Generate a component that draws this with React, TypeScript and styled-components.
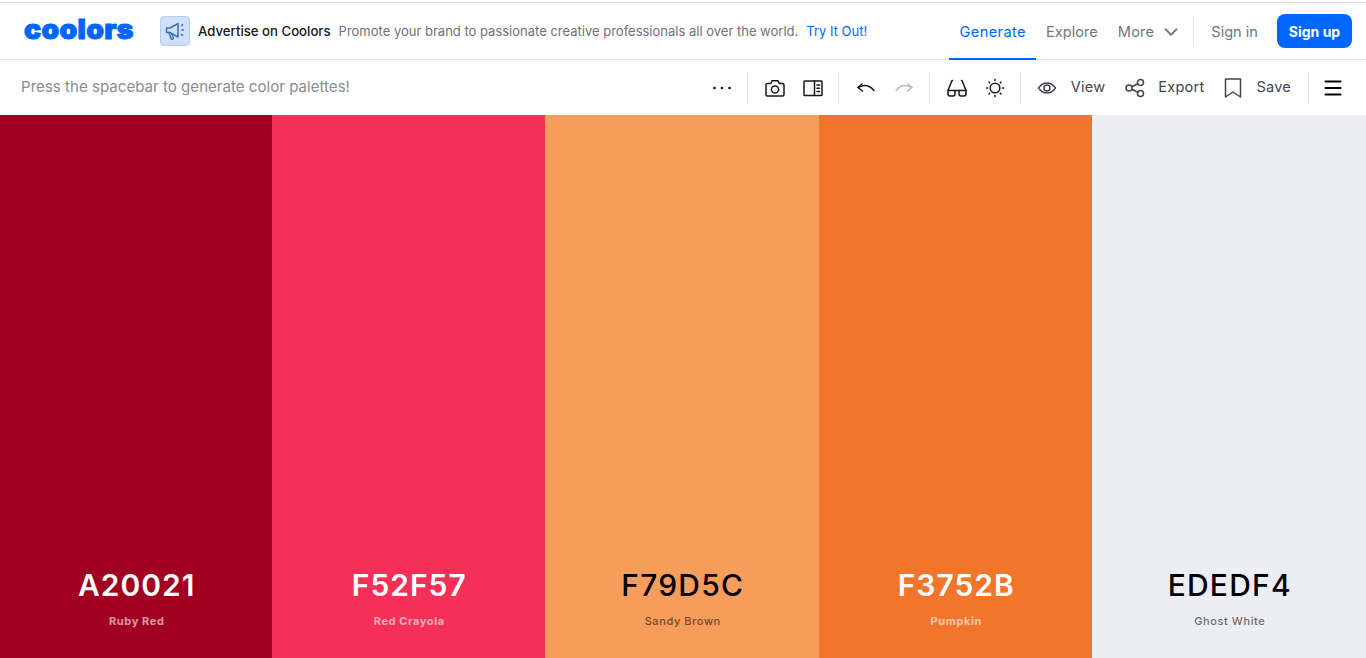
import styled, { createGlobalStyle } from "styled-components";
import { ChevronDown } from "lucide-react";

const GlobalStyle = createGlobalStyle`
  html, body {
    margin: 0;
    padding: 0;
    height: 100%;
    background: #fff;
    font-family: "Inter", sans-serif;
  }
  #root {
    height: 100%;
  }
`;

const Page = styled.div`
  display: flex;
  flex-direction: column;
  height: 658px;
  overflow: hidden;
  padding-top: 2px;
  box-sizing: border-box;
`;

const Header = styled.header`
  display: flex;
  align-items: stretch;
  height: 58px;
  flex-shrink: 0;
  box-sizing: border-box;
  border-top: 1px solid #dedfe1;
  border-bottom: 1px solid #e4e5e7;
  padding: 0 14px 0 24px;
`;

const Logo = styled.div`
  width: 111px;
  margin-right: 25px;
  align-self: center;
  font-family: "Inter", sans-serif;
  font-size: 27px;
  line-height: 27px;
  font-weight: 900;
  letter-spacing: 0.3px;
  color: #0066ff;
  -webkit-text-stroke: 1px #0066ff;
  margin-top: -3px;
  transform: scaleX(1.05);
  transform-origin: left center;
`;

const Promo = styled.div`
  display: flex;
  align-items: center;
  flex: 1;
  font-size: 13px;
`;

const PromoIcon = styled.div`
  width: 28px;
  height: 28px;
  border-radius: 4px;
  border: 1px solid #b3cdf2;
  background: #cfe0fb;
  color: #3f6fb8;
  display: flex;
  align-items: center;
  justify-content: center;
  margin-right: 8px;
`;

const PromoTitle = styled.span`
  color: #16181c;
  font-weight: 500;
  font-size: 13.2px;
  margin-right: 8px;
`;

const PromoText = styled.span`
  color: #6f7278;
  margin-right: 8px;
`;

const PromoLink = styled.span`
  color: #0066ff;
`;

const Nav = styled.nav`
  display: flex;
  align-items: stretch;
`;

const NavItem = styled.div<{ $active?: boolean; $tracking?: number }>`
  display: flex;
  align-items: center;
  padding: 0 10px;
  font-size: 14.6px;
  letter-spacing: ${(p) => p.$tracking ?? 0}px;
  color: ${(p) => (p.$active ? "#0066ff" : "#73767c")};
  box-shadow: ${(p) => (p.$active ? "inset 0 -2px 0 #0066ff" : "none")};
  margin-bottom: -1px;
`;

const NavChevron = styled(ChevronDown)`
  margin-left: 6px;
`;

const NavDivider = styled.div`
  width: 1px;
  height: 28px;
  align-self: center;
  background: #e4e5e7;
  margin: 0 7px 0 1px;
`;

const SignUp = styled.button`
  align-self: center;
  width: 75px;
  height: 34px;
  margin-left: 9px;
  border: 0;
  border-radius: 8px;
  background: #0066ff;
  color: #fff;
  font-family: inherit;
  font-size: 14px;
  font-weight: 700;
  padding: 0;
`;

const Toolbar = styled.div`
  display: flex;
  align-items: center;
  height: 55px;
  flex-shrink: 0;
  padding: 0 21px;
`;

const Hint = styled.div`
  flex: 1;
  font-size: 15.1px;
  color: #8a8d93;
  margin-top: -2px;
`;

const Tools = styled.div`
  display: flex;
  align-items: center;
`;

const ToolButton = styled.div<{ $muted?: boolean }>`
  width: 38px;
  height: 28px;
  display: flex;
  align-items: center;
  justify-content: center;
  color: ${(p) => (p.$muted ? "#b9babd" : "#16181c")};
`;

const ToolDivider = styled.div`
  width: 1px;
  height: 28px;
  background: #e4e5e7;
  margin: 0 8px 0 6px;
`;

const EndDivider = styled(ToolDivider)`
  margin: 0 12px 0 17px;
`;

const LabelTool = styled.div<{ $first?: boolean; $spaced?: boolean }>`
  display: flex;
  align-items: center;
  gap: ${(p) => (p.$first ? 12 : 11)}px;
  margin-left: ${(p) => (p.$first ? 6 : p.$spaced ? 18 : 17)}px;
  font-size: 14.6px;
  letter-spacing: 0.2px;
  color: #43464c;
`;

const ToolLabel = styled.span`
  margin-top: -2px;
`;

const MenuIcon = styled.div`
  display: flex;
  color: #000;
`;

const Palette = styled.main`
  flex: 1;
  display: grid;
  grid-template-columns: 272px 273px 274px 273px 1fr;
`;

const Swatch = styled.section<{ $bg: string; $light?: boolean }>`
  display: flex;
  flex-direction: column;
  align-items: center;
  justify-content: flex-end;
  padding: 0 0 30px 1.5px;
  background: ${(p) => p.$bg};
  color: ${(p) => (p.$light ? "#fff" : "#000")};
`;

const Hex = styled.div<{ $light?: boolean }>`
  font-size: 30px;
  line-height: 36px;
  font-weight: ${(p) => (p.$light ? 600 : 500)};
  letter-spacing: ${(p) => (p.$light ? 1 : 1.2)}px;
  margin-bottom: -1px;
  transform: translateY(1px);
`;

const ColorName = styled.div<{ $light?: boolean }>`
  margin-top: 13px;
  font-size: 11px;
  line-height: 14px;
  font-weight: ${(p) => (p.$light ? 700 : 500)};
  letter-spacing: 0.6px;
  opacity: ${(p) => (p.$light ? 0.6 : 0.55)};
`;

const Icon = styled.svg.attrs({
  viewBox: "0 0 24 24",
  fill: "none",
  stroke: "currentColor",
  strokeWidth: 1.5,
  strokeLinecap: "round",
  strokeLinejoin: "round",
})`
  width: 24px;
  height: 24px;
  flex-shrink: 0;
`;

const swatches = [
  { hex: "A20021", name: "Ruby Red", bg: "#a20021", light: true },
  { hex: "F52F57", name: "Red Crayola", bg: "#f52f57", light: true },
  { hex: "F79D5C", name: "Sandy Brown", bg: "#f79d5c", light: false },
  { hex: "F3752B", name: "Pumpkin", bg: "#f3752b", light: true },
  { hex: "EDEDF4", name: "Ghost White", bg: "#ededf4", light: false },
];

export default function App() {
  return (
    <Page>
      <GlobalStyle />
      <Header>
        <Logo>coolors</Logo>
        <Promo>
          <PromoIcon>
            <Icon>
              <path d="M3.500 9H7l8-4.500V18l-8-4.500H3.500z" />
              <path d="M6 13.500l2 6a1.200 1.200 0 0 0 2.300-.600L9 15" />
              <path d="M18.500 6.500l1-.7M19 11h1.500M18.500 15.500l1 .7" />
            </Icon>
          </PromoIcon>
          <PromoTitle>Advertise on Coolors</PromoTitle>
          <PromoText>Promote your brand to passionate creative professionals all over the world.</PromoText>
          <PromoLink>Try It Out!</PromoLink>
        </Promo>
        <Nav>
          <NavItem $active $tracking={0.4}>Generate</NavItem>
          <NavItem>Explore</NavItem>
          <NavItem $tracking={0.2}>
            More
            <NavChevron size={22} strokeWidth={2} />
          </NavItem>
          <NavDivider />
          <NavItem>Sign in</NavItem>
          <SignUp>Sign up</SignUp>
        </Nav>
      </Header>
      <Toolbar>
        <Hint>Press the spacebar to generate color palettes!</Hint>
        <Tools>
          <ToolButton>
            <Icon>
              <circle cx="4.500" cy="12" r="0.600" fill="currentColor" />
              <circle cx="12" cy="12" r="0.600" fill="currentColor" />
              <circle cx="19.500" cy="12" r="0.600" fill="currentColor" />
            </Icon>
          </ToolButton>
          <ToolDivider />
          <ToolButton>
            <Icon>
              <path d="M4.500 7.500h3.200L9 4.800h6l1.300 2.700h3.200A1.500 1.500 0 0 1 21 9v9.500a1.500 1.500 0 0 1-1.500 1.500h-15A1.500 1.500 0 0 1 3 18.500V9a1.500 1.500 0 0 1 1.500-1.500z" />
              <circle cx="12" cy="13.500" r="3.600" />
            </Icon>
          </ToolButton>
          <ToolButton>
            <Icon>
              <rect x="3" y="5" width="18" height="14.500" rx="0.800" />
              <path d="M13.500 5v14.500M16 9h2.500M16 12.300h2.500M16 15.600h2.500" />
            </Icon>
          </ToolButton>
          <ToolDivider />
          <ToolButton>
            <Icon>
              <path d="M8 8 4 11.500 8.500 15" />
              <path d="M4 11.500c5.500-3 11.500-2.500 16 3" />
            </Icon>
          </ToolButton>
          <ToolButton $muted>
            <Icon>
              <path d="M16 8l4 3.500-4.500 3.500" />
              <path d="M20 11.500c-5.500-3-11.500-2.500-16 3" />
            </Icon>
          </ToolButton>
          <ToolDivider />
          <ToolButton>
            <Icon>
              <path d="M7.500 4.500H7L3 14.500v3.500a2 2 0 0 0 2 2h3a2 2 0 0 0 2-2v-3.500" />
              <path d="M16.500 4.500h.5l4 10v3.500a2 2 0 0 1-2 2h-3a2 2 0 0 1-2-2v-3.500" />
              <path d="M3 14.500h18" />
            </Icon>
          </ToolButton>
          <ToolButton>
            <Icon>
              <circle cx="12" cy="12" r="4.800" />
              <path d="M12 3.500v1M12 19.500v1M3.500 12h1M19.500 12h1M6 6l.7.7M17.300 17.300l.7.7M6 18l.7-.7M17.300 6.700l.7-.7" />
            </Icon>
          </ToolButton>
          <ToolDivider />
          <LabelTool $first>
            <Icon>
              <path d="M3.500 12c2.500-3.500 5.300-5 8.500-5s6 1.500 8.500 5c-2.500 3.500-5.300 5-8.500 5s-6-1.500-8.500-5z" />
              <circle cx="12" cy="12" r="3" />
            </Icon>
            <ToolLabel>View</ToolLabel>
          </LabelTool>
          <LabelTool $spaced>
            <Icon>
              <circle cx="6" cy="12" r="3" />
              <circle cx="17.500" cy="6.500" r="3" />
              <circle cx="17.500" cy="17.500" r="3" />
              <path d="M8.700 10.700l6.100-2.900M8.700 13.300l6.100 2.900" />
            </Icon>
            <ToolLabel>Export</ToolLabel>
          </LabelTool>
          <LabelTool>
            <Icon>
              <path d="M4.500 3h15v18L12 16l-7.500 5z" />
            </Icon>
            <ToolLabel>Save</ToolLabel>
          </LabelTool>
          <EndDivider />
          <MenuIcon>
            <Icon>
              <path d="M4.500 5.500h15M4.500 12h15M4.500 18.500h15" strokeWidth={2} />
            </Icon>
          </MenuIcon>
        </Tools>
      </Toolbar>
      <Palette>
        {swatches.map((s) => (
          <Swatch key={s.hex} $bg={s.bg} $light={s.light}>
            <Hex $light={s.light}>{s.hex}</Hex>
            <ColorName $light={s.light}>{s.name}</ColorName>
          </Swatch>
        ))}
      </Palette>
    </Page>
  );
}
